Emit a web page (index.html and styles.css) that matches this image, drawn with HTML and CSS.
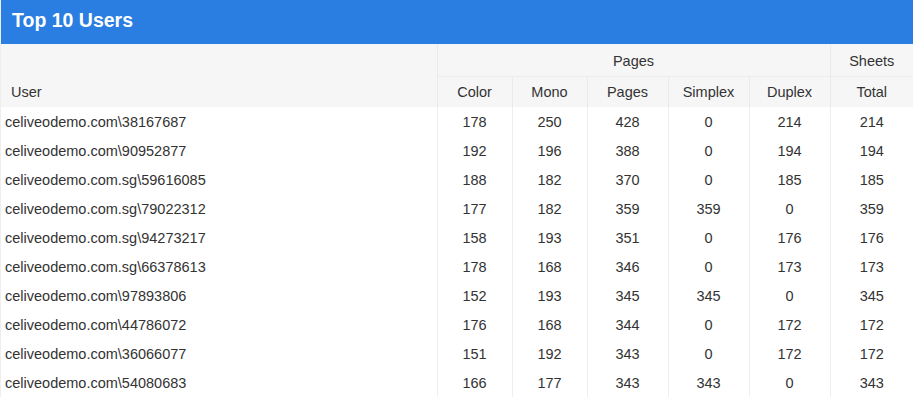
FILE: index.html
```html
<!DOCTYPE html>
<html lang="en">
<head>
    <meta charset="UTF-8">
    <meta name="viewport" content="width=device-width, initial-scale=1.0">
    <title>Top 10 Users</title>
    <link rel="stylesheet" href="styles.css">
</head>
<body>
    <div class="panel">
        <div class="panel-title">Top 10 Users</div>

        <table class="users-table">
            <colgroup>
                <col class="col-user">
                <col class="col-narrow">
                <col class="col-narrow">
                <col class="col-wide">
                <col class="col-wide">
                <col class="col-wide">
                <col>
            </colgroup>
            <thead>
                <tr class="group-row">
                    <th rowspan="2" class="user-head">User</th>
                    <th colspan="5">Pages</th>
                    <th>Sheets</th>
                </tr>
                <tr class="label-row">
                    <th>Color</th>
                    <th>Mono</th>
                    <th>Pages</th>
                    <th>Simplex</th>
                    <th>Duplex</th>
                    <th>Total</th>
                </tr>
            </thead>
            <tbody>
                <tr><td>celiveodemo.com\38167687</td><td>178</td><td>250</td><td>428</td><td>0</td><td>214</td><td>214</td></tr>
                <tr><td>celiveodemo.com\90952877</td><td>192</td><td>196</td><td>388</td><td>0</td><td>194</td><td>194</td></tr>
                <tr><td>celiveodemo.com.sg\59616085</td><td>188</td><td>182</td><td>370</td><td>0</td><td>185</td><td>185</td></tr>
                <tr><td>celiveodemo.com.sg\79022312</td><td>177</td><td>182</td><td>359</td><td>359</td><td>0</td><td>359</td></tr>
                <tr><td>celiveodemo.com.sg\94273217</td><td>158</td><td>193</td><td>351</td><td>0</td><td>176</td><td>176</td></tr>
                <tr><td>celiveodemo.com.sg\66378613</td><td>178</td><td>168</td><td>346</td><td>0</td><td>173</td><td>173</td></tr>
                <tr><td>celiveodemo.com\97893806</td><td>152</td><td>193</td><td>345</td><td>345</td><td>0</td><td>345</td></tr>
                <tr><td>celiveodemo.com\44786072</td><td>176</td><td>168</td><td>344</td><td>0</td><td>172</td><td>172</td></tr>
                <tr><td>celiveodemo.com\36066077</td><td>151</td><td>192</td><td>343</td><td>0</td><td>172</td><td>172</td></tr>
                <tr><td>celiveodemo.com\54080683</td><td>166</td><td>177</td><td>343</td><td>343</td><td>0</td><td>343</td></tr>
            </tbody>
        </table>
    </div>
</body>
</html>
```

FILE: styles.css
```css
body {
    margin: 0;
    font-family: "Liberation Sans", Arial, sans-serif;
    font-size: 14.5px;
    color: #333;
    background-color: #fff;
}

.panel {
    border-left: 1px solid #eee;
}

.panel-title {
    height: 44px;
    line-height: 40px;
    padding-left: 11px;
    background-color: #2a7de1; /* ヘッダーの青 */
    color: #fff;
    font-size: 19.5px;
    font-weight: bold;
}

.users-table {
    width: 100%;
    border-collapse: collapse;
    table-layout: fixed;
}

.col-user { width: 436px; }
.col-narrow { width: 75px; }
.col-wide { width: 81px; }

.users-table th {
    font-weight: normal;
    background-color: #f6f6f6;
    border-left: 1px solid #eaeaea;
    text-align: center;
    padding: 0;
}

.users-table th.user-head {
    border-left: none;
    text-align: left;
    vertical-align: bottom;
    line-height: 29px;
    padding: 0 0 0 10px;
}

.group-row th {
    padding-top: 2px;
    line-height: 30px;
}

.label-row th {
    padding-top: 1px;
    line-height: 29px;
    border-top: 1px solid #ececec;
}

.users-table td {
    padding: 1px 0 0;
    line-height: 28px;
    text-align: center;
    border-left: 1px solid #eeeeee;
    vertical-align: top;
}

.users-table td:first-child {
    border-left: none;
    text-align: left;
    padding-left: 4px;
}
```
